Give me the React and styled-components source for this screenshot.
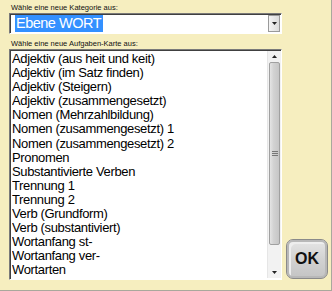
import React from "react";
import styled, { createGlobalStyle } from "styled-components";

const GlobalStyle = createGlobalStyle`
  html, body {
    margin: 0;
    padding: 0;
    background: #f6eebf;
  }
  body {
    font-family: "Liberation Sans", Arial, sans-serif;
  }
`;

const Window = styled.div`
  width: 332px;
  height: 291px;
  box-sizing: border-box;
  background: #f6eebf;
  border-right: 1px solid #a9a89c;
  border-bottom: 1px solid #a9a89c;
  padding: 3px 0 0 9px;
  display: flex;
  flex-direction: column;
`;

const Label = styled.div`
  font-size: 7.5px;
  line-height: 10px;
  color: #111;
  padding-left: 2px;
  margin-top: ${({ $gap }) => $gap || 0}px;
`;

const Inset = styled.div`
  box-sizing: border-box;
  background: #fff;
  border: 1px solid;
  border-color: #7a7a7a #ffffff #ffffff #7a7a7a;
  box-shadow: inset 1px 1px 0 #404040;
`;

const SelectBox = styled(Inset)`
  width: 273px;
  height: 21px;
  display: flex;
  align-items: center;
  padding: 1px 1px 1px 5px;
`;

const Selected = styled.div`
  background: #3390ff;
  color: #fff;
  font-size: 14.5px;
  letter-spacing: -0.5px;
  line-height: 17px;
  padding: 0 2px 0 1px;
`;

const DropButton = styled.div`
  margin-left: auto;
  width: 12px;
  height: 17px;
  box-sizing: border-box;
  border: 1px solid #9a9a9a;
  background: linear-gradient(90deg, #f4f4f4, #dcdcdc);
  display: flex;
  align-items: center;
  justify-content: center;
`;

const Row = styled.div`
  display: flex;
  align-items: flex-end;
  gap: 4px;
`;

const ListBox = styled(Inset)`
  width: 273px;
  height: 231px;
  display: flex;
  padding: 1px 0 1px 2px;
`;

const Items = styled.div`
  flex: 1;
  overflow: hidden;
  padding-top: 1px;
`;

const Item = styled.div`
  font-size: 13px;
  letter-spacing: -0.35px;
  line-height: 14.1px;
  color: #000;
  white-space: nowrap;
`;

const ScrollBar = styled.div`
  width: 13px;
  display: flex;
  flex-direction: column;
  background: #f2f2f2;
  border-left: 1px solid #e6e6e6;
`;

const Arrow = styled.div`
  height: 11px;
  display: flex;
  align-items: center;
  justify-content: center;
`;

const Thumb = styled.div`
  height: 183px;
  margin: 0 1px;
  box-sizing: border-box;
  border: 1px solid #a0a0a0;
  border-radius: 2px;
  background: linear-gradient(90deg, #e4e4e4, #d2d2d2 40%, #c6c6c6);
  display: flex;
  align-items: center;
  justify-content: center;
`;

const Track = styled.div`
  flex: 1;
`;

const OkButton = styled.button`
  width: 42px;
  height: 40px;
  margin-bottom: 1px;
  border: 1px solid #8a8a8a;
  border-radius: 7px;
  background: linear-gradient(180deg, #e6e6e6, #d2d2d2 50%, #c4c4c4);
  box-shadow: inset 0 0 0 2px #b8b8b8, inset 3px 3px 0 1px #eeeeee;
  font-family: "Liberation Sans", Arial, sans-serif;
  font-weight: bold;
  font-size: 16px;
  color: #111;
  padding: 0;
`;

const items = [
  "Adjektiv (aus heit und keit)",
  "Adjektiv (im Satz finden)",
  "Adjektiv (Steigern)",
  "Adjektiv (zusammengesetzt)",
  "Nomen (Mehrzahlbildung)",
  "Nomen (zusammengesetzt) 1",
  "Nomen (zusammengesetzt) 2",
  "Pronomen",
  "Substantivierte Verben",
  "Trennung 1",
  "Trennung 2",
  "Verb (Grundform)",
  "Verb (substantiviert)",
  "Wortanfang st-",
  "Wortanfang ver-",
  "Wortarten",
];

const Triangle = ({ up }) => (
  <svg width="5" height="3" viewBox="0 0 5 3">
    <path d={up ? "M0 3 L2.5 0 L5 3 Z" : "M0 0 L5 0 L2.5 3 Z"} fill="#222" />
  </svg>
);

const Grip = () => (
  <svg width="6" height="5" viewBox="0 0 6 5">
    <path d="M0 0.5H6M0 2.5H6M0 4.5H6" stroke="#777" strokeWidth="1" />
  </svg>
);

export default function App() {
  return (
    <>
      <GlobalStyle />
      <Window>
        <Label>Wähle eine neue Kategorie aus:</Label>
        <SelectBox>
          <Selected>Ebene WORT</Selected>
          <DropButton>
            <Triangle />
          </DropButton>
        </SelectBox>
        <Label $gap={5}>Wähle eine neue Aufgaben-Karte aus:</Label>
        <Row>
          <ListBox>
            <Items>
              {items.map((t) => (
                <Item key={t}>{t}</Item>
              ))}
            </Items>
            <ScrollBar>
              <Arrow>
                <Triangle up />
              </Arrow>
              <Thumb>
                <Grip />
              </Thumb>
              <Track />
              <Arrow>
                <Triangle />
              </Arrow>
            </ScrollBar>
          </ListBox>
          <OkButton>OK</OkButton>
        </Row>
      </Window>
    </>
  );
}
